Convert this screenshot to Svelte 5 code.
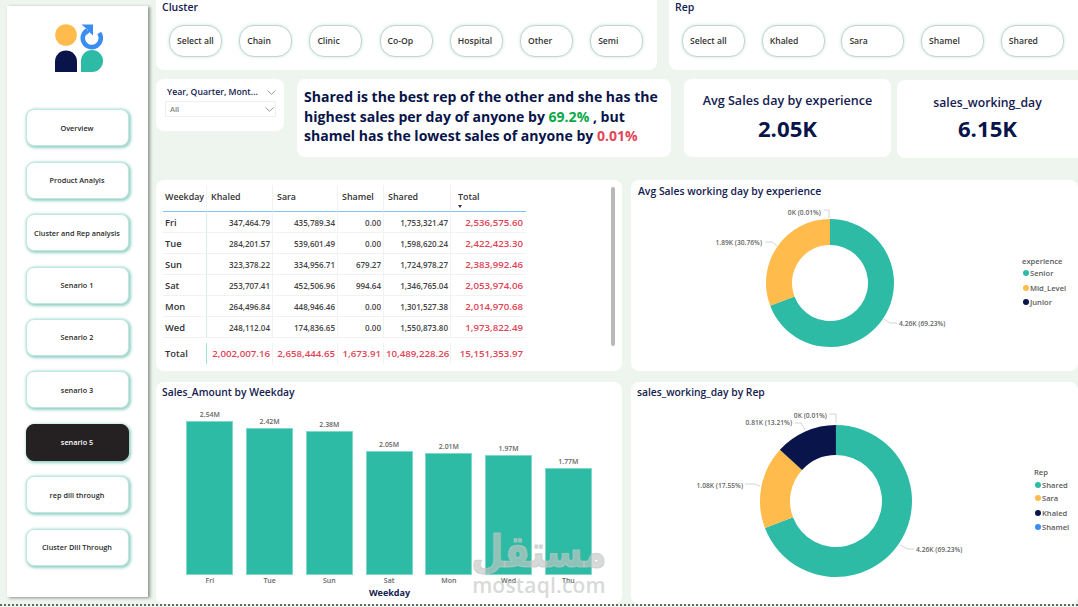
<script>
  const nav = ['Overview','Product Analyis','Cluster and Rep analysis','Senario 1','Senario 2','senario 3','senario 5','rep dill through','Cluster Dill Through'];
  const clusters = ['Select all','Chain','Clinic','Co-Op','Hospital','Other','Semi'];
  const reps = ['Select all','Khaled','Sara','Shamel','Shared'];
  const rows = [
    ['Fri','347,464.79','435,789.34','0.00','1,753,321.47','2,536,575.60'],
    ['Tue','284,201.57','539,601.49','0.00','1,598,620.24','2,422,423.30'],
    ['Sun','323,378.22','334,956.71','679.27','1,724,978.27','2,383,992.46'],
    ['Sat','253,707.41','452,506.96','994.64','1,346,765.04','2,053,974.06'],
    ['Mon','264,496.84','448,946.46','0.00','1,301,527.38','2,014,970.68'],
    ['Wed','248,112.04','174,836.65','0.00','1,550,873.80','1,973,822.49']
  ];
  const totals = ['2,002,007.16','2,658,444.65','1,673.91','10,489,228.26','15,151,353.97'];
  const bars = [['Fri','2.54M',154],['Tue','2.42M',147],['Sun','2.38M',144],['Sat','2.05M',124],['Mon','2.01M',122],['Wed','1.97M',120],['Thu','1.77M',107]];

  const C = { teal:'#2EBBA6', yellow:'#FFBB4B', navy:'#08144A', blue:'#3A8DF5' };

  function arc(cx, cy, R, r, fromPct, toPct) {
    const a0 = fromPct / 100 * 2 * Math.PI - Math.PI / 2;
    const a1 = toPct / 100 * 2 * Math.PI - Math.PI / 2;
    const large = toPct - fromPct > 50 ? 1 : 0;
    const p = (rad, a) => `${(cx + rad * Math.cos(a)).toFixed(2)} ${(cy + rad * Math.sin(a)).toFixed(2)}`;
    return `M${p(R,a0)}A${R} ${R} 0 ${large} 1 ${p(R,a1)}L${p(r,a1)}A${r} ${r} 0 ${large} 0 ${p(r,a0)}Z`;
  }
  function slices(values, cx, cy, R, r) {
    let start = 0;
    return values.map(([pct, color]) => {
      const d = arc(cx, cy, R, r, start, start + pct);
      start += pct;
      return { d, color };
    });
  }
  const donut1 = slices([[69.23,C.teal],[30.76,C.yellow],[0.01,C.navy]], 199, 103, 64, 38);
  const donut2 = slices([[69.23,C.teal],[17.55,C.yellow],[13.21,C.navy],[0.01,C.blue]], 205, 119, 76, 46);
</script>

<div class="page">
  <aside class="sidebar">
    <svg class="logo" viewBox="0 0 48 48" width="48" height="48" aria-label="logo">
      <circle cx="11" cy="11" r="10.8" fill="#FFBB4B"/>
      <path d="M0 48V37.500A11 11 0 0 1 22 37.500V48Z" fill="#08144A"/>
      <path d="M26 48V37A11 11 0 1 1 37 48Z" fill="#2EBBA6"/>
      <path d="M32.500 6.200A9 9 0 1 0 44.200 9" fill="none" stroke="#3A8DF5" stroke-width="4.600"/>
      <path d="M26.500 .5H38V11.500L34.500 8.200 31 11.500 33 6 Z" fill="#3A8DF5"/>
    </svg>
    <nav class="nav">
      {#each nav as item}
        <button class="nav-btn" class:active={item === 'senario 5'}>{item}</button>
      {/each}
    </nav>
  </aside>

  <main class="main">
    <section class="row row1">
      <div class="card slicer cluster">
        <h3 class="slicer-title">Cluster</h3>
        <div class="pills">
          {#each clusters as c}<span class="pill">{c}</span>{/each}
        </div>
      </div>
      <div class="card slicer rep">
        <h3 class="slicer-title">Rep</h3>
        <div class="pills">
          {#each reps as r}<span class="pill">{r}</span>{/each}
        </div>
      </div>
    </section>

    <section class="row row2">
      <div class="card date">
        <div class="date-head">
          <span>Year, Quarter, Mont...</span>
          <svg width="9" height="5" viewBox="0 0 9 5"><path d="M.5.5 4.500 4.300 8.500.5" fill="none" stroke="#8a8f99" stroke-width=".9"/></svg>
        </div>
        <div class="date-box">
          <span>All</span>
          <svg width="9" height="5" viewBox="0 0 9 5"><path d="M.5.5 4.500 4.300 8.500.5" fill="none" stroke="#8a8f99" stroke-width=".9"/></svg>
        </div>
      </div>
      <div class="card insight">
        Shared is the best rep of the other and she has the highest sales per day of anyone by <span class="good">69.2%</span> , but shamel has the lowest sales of anyone by <span class="bad">0.01%</span>
      </div>
      <div class="card kpi kpi1">
        <div class="kpi-label">Avg Sales day by experience</div>
        <div class="kpi-value">2.05K</div>
      </div>
      <div class="card kpi kpi2">
        <div class="kpi-label">sales_working_day</div>
        <div class="kpi-value">6.15K</div>
      </div>
    </section>

    <section class="row row3">
      <div class="card table-card">
        <table>
          <colgroup>
            <col style="width:44px"/><col style="width:66px"/><col style="width:65px"/><col style="width:46px"/><col style="width:67px"/><col style="width:75px"/>
          </colgroup>
          <thead>
            <tr>
              <th>Weekday</th><th>Khaled</th><th>Sara</th><th>Shamel</th><th>Shared</th>
              <th>Total<i class="sort"></i></th>
            </tr>
          </thead>
          <tbody>
            {#each rows as r}
              <tr>
                <td class="day">{r[0]}</td>
                <td class="num">{r[1]}</td>
                <td class="num">{r[2]}</td>
                <td class="num">{r[3]}</td>
                <td class="num">{r[4]}</td>
                <td class="num red">{r[5]}</td>
              </tr>
            {/each}
          </tbody>
          <tfoot>
            <tr class="spacer"><td colspan="6"></td></tr>
            <tr>
              <td class="day">Total</td>
              {#each totals as t}<td class="num red">{t}</td>{/each}
            </tr>
          </tfoot>
        </table>
        <div class="scrollbar"></div>
      </div>

      <div class="card chart-card">
        <h3 class="chart-title">Avg Sales working day by experience</h3>
        <svg class="chart" width="447" height="191" viewBox="0 0 447 191">
          {#each donut1 as s}<path d={s.d} fill={s.color}/>{/each}
          <g class="leader">
            <path d="M193 30H198V38"/><path d="M134 62H141L146 66"/><path d="M253 139 259 143H266"/>
          </g>
          <g class="lbl">
            <text x="190" y="35" text-anchor="end">0K (0.01%)</text>
            <text x="131" y="65" text-anchor="end">1.89K (30.76%)</text>
            <text x="268" y="146">4.26K (69.23%)</text>
          </g>
          <g class="legend">
            <text x="391" y="84" class="legend-title">experience</text>
            <circle cx="395" cy="93" r="3" fill="#2EBBA6"/><text x="399" y="96">Senior</text>
            <circle cx="395" cy="108" r="3" fill="#FFBB4B"/><text x="399" y="111">Mid_Level</text>
            <circle cx="395" cy="122" r="3" fill="#08144A"/><text x="399" y="125">Junior</text>
          </g>
        </svg>
      </div>
    </section>

    <section class="row row4">
      <div class="card bar-card">
        <h3 class="chart-title">Sales_Amount by Weekday</h3>
        <div class="bars">
          {#each bars as b}
            <div class="bar-col">
              <span class="bar-val">{b[1]}</span>
              <div class="bar" style="height:{b[2]}px"></div>
              <span class="bar-name">{b[0]}</span>
            </div>
          {/each}
        </div>
        <div class="axis-title">Weekday</div>
      </div>

      <div class="card chart-card">
        <h3 class="chart-title">sales_working_day by Rep</h3>
        <svg class="chart" width="447" height="222" viewBox="0 0 447 222">
          {#each donut2 as s}<path d={s.d} fill={s.color}/>{/each}
          <g class="leader">
            <path d="M198 32H205V41"/><path d="M164 41H170L174 48"/><path d="M114 102H124L129 104"/><path d="M269 163 277 167H283"/>
          </g>
          <g class="lbl">
            <text x="196" y="36" text-anchor="end">0K (0.01%)</text>
            <text x="161" y="43" text-anchor="end">0.81K (13.21%)</text>
            <text x="112" y="106" text-anchor="end">1.08K (17.55%)</text>
            <text x="285" y="170">4.26K (69.23%)</text>
          </g>
          <g class="legend">
            <text x="403" y="93" class="legend-title">Rep</text>
            <circle cx="407" cy="103" r="3" fill="#2EBBA6"/><text x="411" y="106">Shared</text>
            <circle cx="407" cy="116" r="3" fill="#FFBB4B"/><text x="411" y="119">Sara</text>
            <circle cx="407" cy="131" r="3" fill="#08144A"/><text x="411" y="134">Khaled</text>
            <circle cx="407" cy="145" r="3" fill="#3A8DF5"/><text x="411" y="148">Shamel</text>
          </g>
        </svg>
      </div>
    </section>
  </main>

  <div class="watermark">
    <div class="wm-ar" dir="rtl" lang="ar">مستقل</div>
    <div class="wm-en">mostaql.com</div>
  </div>
  <div class="dots"></div>
</div>

<style>
  :global(body) { margin: 0; background: #EEF5EE; }
  .page {
    position: relative;
    width: 1078px;
    height: 607px;
    overflow: hidden;
    display: flex;
    background: #EEF5EE;
    font-family: "Open Sans", "Noto Sans", sans-serif;
    color: #08144A;
  }
  .sidebar {
    flex: none;
    width: 141px;
    height: 591px;
    margin: 6px 0 0 7px;
    background: #fff;
    box-shadow: 2px 1px 3px rgba(70, 80, 75, .6);
    display: flex;
    flex-direction: column;
    align-items: center;
    box-sizing: border-box;
    padding-top: 18px;
  }
  .logo { flex: none; align-self: flex-start; margin-left: 48px; }
  .nav {
    margin-top: 37.400px;
    display: flex;
    flex-direction: column;
    gap: 15.400px;
    margin-left: -1px;
  }
  .nav-btn {
    width: 103px;
    height: 37px;
    padding: 0;
    border: 1px solid #BFE8E0;
    border-radius: 8px;
    background: #fff;
    box-shadow: 1px 1px 3px 1px rgba(60, 170, 150, .55);
    font: 600 7.300px "Open Sans", sans-serif;
    color: #2a2a2a;
  }
  .nav-btn.active { background: #252122; color: #fff; border-color: #252122; }

  .main { flex: none; width: 922px; margin-left: 8px; }
  .row { display: flex; align-items: flex-start; }
  .card { background: #fff; border-radius: 8px; box-sizing: border-box; flex: none; }

  .row1 { height: 70px; }
  .slicer { height: 78px; margin-top: -8px; padding: 8px 0 0 6px; position: relative; }
  .cluster { width: 501px; }
  .rep { width: 420px; margin-left: 12px; }
  .slicer-title { margin: 0; font-size: 10.500px; font-weight: 600; line-height: 14px; color: #14204f; }
  .pills { display: flex; margin-top: 11px; margin-left: 7px; gap: 17.200px; }
  .rep .pills { gap: 16.700px; }
  .pill {
    flex: none;
    box-sizing: border-box;
    width: 53px;
    height: 32px;
    padding-left: 7px;
    line-height: 30px;
    font-size: 8.600px;
    font-weight: 600;
    color: #333;
    background: #fff;
    border: 1px solid #c8d2cf;
    border-radius: 15px;
    box-shadow: 0 0 3px rgba(120, 210, 190, .5);
  }
  .rep .pill { width: 63px; }

  .row2 { margin-top: 9px; height: 79px; }
  .date { width: 128px; height: 52px; padding: 7px 8px 0 11px; }
  .date-head { display: flex; justify-content: space-between; align-items: center; font-size: 8.700px; font-weight: 600; line-height: 12px; color: #14204f; }
  .date-box {
    display: flex; justify-content: space-between; align-items: center;
    box-sizing: border-box; height: 16px; margin: 3px 0 0 -2px; width: 111px; padding: 0 1px 0 4px;
    border: 1px solid #eef0f0; font-size: 7.500px; font-weight: 600; color: #7f8288;
  }
  .insight {
    width: 374px; height: 78px; margin-left: 13px;
    padding: 8px 0 0 7px;
    font-size: 14.050px; font-weight: 700; line-height: 19.700px; color: #08144A;
  }
  .good { color: #0BA84A; }
  .bad { color: #E2475A; }
  .kpi { display: flex; flex-direction: column; align-items: center; text-align: center; }
  .kpi1 { width: 207px; height: 78px; margin-left: 13px; padding-top: 13px; }
  .kpi2 { width: 190px; height: 78px; margin-left: 6px; margin-top: 1px; padding-top: 14px; padding-right: 9px; }
  .kpi-label { font-size: 12.600px; font-weight: 600; line-height: 17px; color: #14204f; }
  .kpi2 .kpi-label { font-size: 12.200px; }
  .kpi-value { font-size: 22.200px; font-weight: 700; line-height: 30px; margin-top: 5px; color: #08144A; }
  .kpi2 .kpi-value { margin-top: 3px; }

  .row3 { margin-top: 22px; gap: 9px; }
  .table-card { position: relative; width: 466px; height: 191px; padding: 5px 0 0 7px; }
  table { border-collapse: separate; border-spacing: 0; table-layout: fixed; width: 363px; }
  th {
    box-sizing: border-box;
    height: 27px; padding: 4px 0 0 4px; vertical-align: top;
    font-size: 8.900px; font-weight: 600; line-height: 16px; text-align: left; color: #333;
    border-bottom: 1px solid #86C0EE; border-right: 1px solid #f0f3f2; white-space: nowrap; position: relative;
  }
  th:first-child { padding-left: 2px; }
  th:last-child { border-right: 0; padding-left: 7px; }
  .sort { position: absolute; left: 7px; top: 20px; border: 2.500px solid transparent; border-top: 3px solid #333; border-bottom: 0; }
  td { box-sizing: border-box; padding: 0 2px; white-space: nowrap; }
  tbody td { height: 21px; border-bottom: 1px solid #f0f3f2; border-right: 1px solid #f0f3f2; }
  tbody td:last-child, tfoot td:last-child { border-right: 0; padding-right: 3px; }
  td.day { font-size: 9.400px; font-weight: 600; color: #333; padding-left: 2px; }
  tbody td.day { border-right-color: #d5f0ea; }
  .num { font-size: 8px; font-weight: 600; color: #444; text-align: right; }
  td.red { font-size: 9.700px; font-weight: 600; color: #DF4557; }
  .spacer td { height: 5px; padding: 0; border: 0; }
  tfoot td { height: 21px; border-right: 1px solid #f0f3f2; }
  tfoot td.day { border-right: 1px solid #9fded2; }
  .scrollbar { position: absolute; left: 455px; top: 7px; width: 4px; height: 159px; background: #b9b9b9; border-radius: 2px; }

  .chart-card { position: relative; width: 447px; }
  .row3 .chart-card { height: 191px; }
  .row4 .chart-card { height: 222px; }
  .chart-title { position: relative; z-index: 1; margin: 0; padding: 4px 0 0 7px; font-size: 10.400px; font-weight: 600; line-height: 14px; color: #14204f; }
  .row4 .chart-title { padding: 3px 0 0 6px; font-size: 10.300px; }
  .chart { position: absolute; left: 0; top: 0; }
  .leader path { fill: none; stroke: #c9c9c9; stroke-width: .8; }
  .lbl text { font-size: 6.700px; font-weight: 600; fill: #666; }
  .legend text { font-size: 7.600px; font-weight: 600; fill: #5c5c5c; }

  .row4 { margin-top: 11px; gap: 9px; }
  .bar-card { width: 466px; height: 222px; position: relative; }
  .bars { position: absolute; left: 24px; bottom: 17px; display: grid; grid-template-columns: repeat(7, 59.750px); align-items: end; }
  .bar-col { display: flex; flex-direction: column; align-items: center; }
  .bar-val { font-size: 6.900px; font-weight: 600; line-height: 10px; color: #666; margin-bottom: 1px; }
  .bar { width: 47px; background: #2EBBA6; box-shadow: inset 0 0 0 1px #7FD9C9; }
  .bar-name { font-size: 7px; font-weight: 600; line-height: 12px; color: #666; height: 12px; }
  .axis-title { position: absolute; left: 0; width: 467px; bottom: 4px; text-align: center; font-size: 9px; font-weight: 700; line-height: 14px; color: #14204f; }

  .watermark {
    position: absolute; left: 470px; top: 533px; width: 138px; text-align: center;
    color: rgba(195, 200, 197, .66); pointer-events: none;
  }
  .wm-ar { font-family: "DejaVu Sans", sans-serif; font-weight: 700; font-size: 37px; line-height: 40px; transform: scaleY(1.2); -webkit-text-stroke: 1px rgba(195, 200, 197, .66); }
  .wm-en { font-family: "Open Sans", sans-serif; font-size: 21px; font-weight: 600; line-height: 24px; letter-spacing: .2px; }
  .dots { position: absolute; left: 0; right: 0; bottom: 0; height: 3px; border-top: 2px dotted #666; box-sizing: border-box; }
</style>
